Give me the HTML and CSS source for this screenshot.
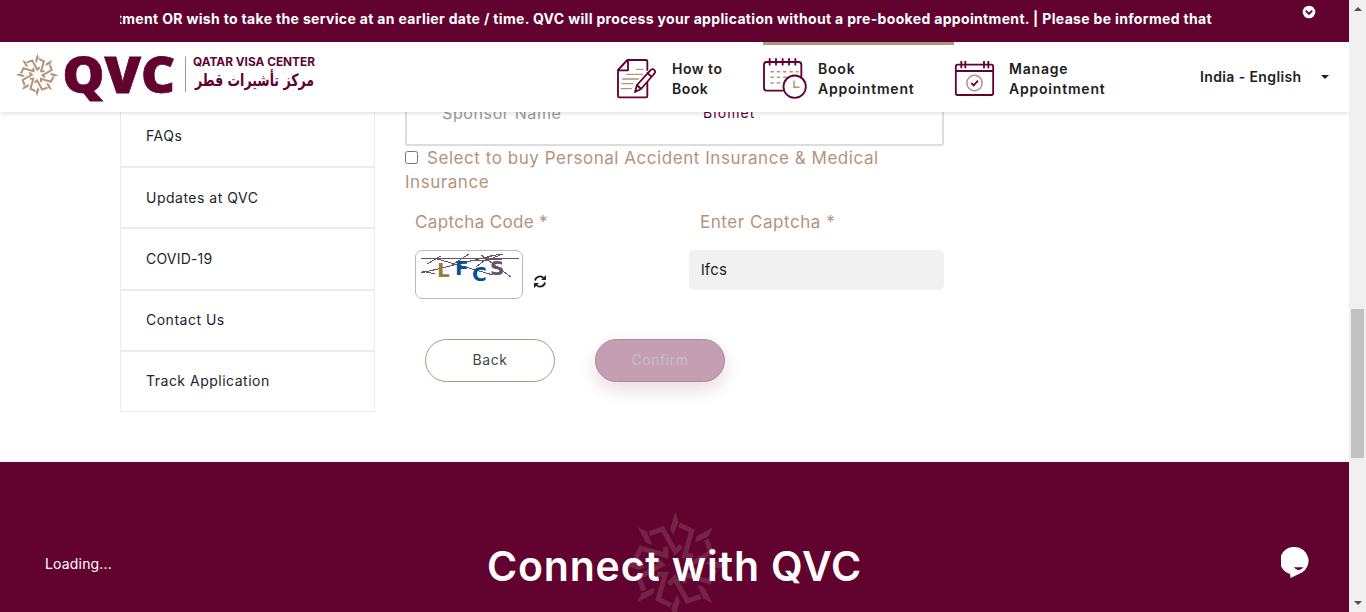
FILE: index.html
```html
<!DOCTYPE html>
<html lang="en">
<head>
<meta charset="utf-8">
<title>Qatar Visa Center</title>
<link rel="stylesheet" href="styles.css">
</head>
<body>
<svg class="defs" aria-hidden="true">
  <defs>
    <g id="arm">
      <path d="M1-160L11-130L-5-90L-15-108Z" fill="currentColor"/>
      <path d="M-77-94L-37-108L1-40L19-58" fill="none" stroke="currentColor" stroke-width="15"/>
    </g>
    <g id="emblem">
      <use href="#arm"/><use href="#arm" transform="rotate(45)"/><use href="#arm" transform="rotate(90)"/><use href="#arm" transform="rotate(135)"/>
      <use href="#arm" transform="rotate(180)"/><use href="#arm" transform="rotate(225)"/><use href="#arm" transform="rotate(270)"/><use href="#arm" transform="rotate(315)"/>
    </g>
  </defs>
</svg>
<div class="page">
  <header class="header">
    <div class="ticker">
      <div class="ticker-window"><span class="ticker-text">tment OR wish to take the service at an earlier date / time. QVC will process your application without a pre-booked appointment. | Please be informed that</span></div>
      <svg class="ticker-toggle" width="14" height="14" viewBox="0 0 14 14"><circle cx="7" cy="7" r="6.3" fill="#fff"/><path d="M3.8 5.6L7 8.8L10.2 5.6" fill="none" stroke="#62022f" stroke-width="1.9"/></svg>
    </div>
    <nav class="nav">
      <svg class="logo" width="320" height="70" viewBox="0 42 320 70">
        <g class="gold" transform="translate(37.2 75) scale(.134)"><use href="#emblem"/></g>
        <text class="logo-main" x="62.500" y="92.500" textLength="112.500" lengthAdjust="spacingAndGlyphs">QVC</text>
        <path d="M185.5 56.500V92" stroke="#b4937b"/>
        <text class="logo-en" x="193" y="66" textLength="122" lengthAdjust="spacingAndGlyphs">QATAR VISA CENTER</text>
        <text class="logo-ar" x="314" y="86" direction="rtl" textLength="119" lengthAdjust="spacingAndGlyphs">مركز تأشيرات قطر</text>
      </svg>
      <a class="nav-item how">
        <svg width="41" height="42" viewBox="48 51 123 126" fill="none" stroke="#62022f" stroke-width="5.500" stroke-linejoin="round" stroke-linecap="round">
          <path d="M142 90V64Q142 60 138 60H82L54 90V168Q54 172 58 172H138Q142 172 142 168V129M84 60V91H55"/>
          <path d="M110 88H129M80 103H128M68 117H115M66 131H99M64 146H94" stroke="#b4937b" stroke-width="4"/>
          <path d="M105 156L111 135L151 91Q158 84 163 90Q168 96 162 102L123 147ZM111 135L123 147M142 99L154 110" fill="#fff"/>
        </svg>
        <span>How to<br>Book</span>
      </a>
      <a class="nav-item book">
        <svg width="45" height="42" viewBox="489 51 135 126" fill="none" stroke="#62022f" stroke-width="5.500" stroke-linecap="round">
          <rect x="492" y="66" width="112" height="86" rx="8"/>
          <path d="M509 57V74M528 57V74M548 57V74M567 57V74M586 57V74"/>
          <path d="M513 95H520M532 95H539M551 95H558M570 95H577M589 95H594M513 112H520M532 112H539M551 112H558M513 129H520M532 129H539" stroke="#b4937b" stroke-width="4.500"/>
          <circle cx="584" cy="140" r="33.500" fill="#fff"/>
          <path d="M582 124V142H597" stroke="#b4937b" stroke-width="4.500"/>
        </svg>
        <span>Book<br>Appointment</span>
      </a>
      <a class="nav-item manage">
        <svg width="41" height="42" viewBox="282 51 123 126" fill="none" stroke="#62022f" stroke-width="5.500">
          <rect x="287.500" y="74" width="112" height="91" rx="5"/>
          <path d="M287 93H400M304 63V85M316 63V85M372 63V85M385 63V85"/>
          <circle cx="343.500" cy="129" r="23" stroke="#b4937b" stroke-width="4.500"/>
          <path d="M334 129L341 136L354 122"/>
        </svg>
        <span>Manage<br>Appointment</span>
      </a>
      <div class="lang"><span>India - English</span><i class="caret"></i></div>
    </nav>
  </header>

  <main class="main">
    <ul class="side">
      <li>FAQs</li><li>Updates at QVC</li><li class="tight">COVID-19</li><li>Contact Us</li><li>Track Application</li>
    </ul>
    <section class="form">
      <div class="card"><span class="card-label">Sponsor Name</span><span class="card-value">Biomet</span></div>
      <label class="insurance"><input type="checkbox">Select to buy Personal Accident Insurance &amp; Medical<br>Insurance</label>
      <div class="captcha">
        <div class="captcha-col">
          <span class="field-label">Captcha Code *</span>
          <div class="captcha-row">
            <svg class="captcha-img" width="108" height="49" viewBox="415 250 108 49">
              <rect x="415.500" y="250.500" width="107" height="48" rx="6.500" fill="#fff" stroke="#bdb7bb"/>
              <g stroke="#675469" fill="none" shape-rendering="crispEdges"><path d="M421 258.500H519M421 273L500 254M427 264L441 256M434 258L493 275M422 271L435 274M452 265L469 254M481 255L511 277M485 261L503 254M470 261L518 258M476 267L492 255"/></g>
              <g class="captcha-text"><text x="437" y="277" fill="#94803a">L</text><text x="455" y="275" fill="#064f94">F</text><text x="472" y="281" fill="#064f94">C</text><text x="490" y="275" fill="#675469">S</text></g>
            </svg>
            <svg width="12" height="13" viewBox="0 0 12 13" fill="none" stroke="#222" stroke-width="1.800"><path d="M1 5.500A5 5 0 0 1 9.800 3.200M11 7.500A5 5 0 0 1 2.200 9.800"/><path d="M12 0V5H7ZM0 13V8H5Z" fill="#222" stroke="none"/></svg>
          </div>
        </div>
        <div class="captcha-col enter">
          <span class="field-label">Enter Captcha *</span>
          <div class="input">lfcs</div>
        </div>
      </div>
      <div class="actions"><button class="btn back">Back</button><button class="btn confirm">Confirm</button></div>
    </section>
  </main>

  <footer class="footer">
    <span class="loading">Loading...</span>
    <div class="connect">
      <svg class="watermark" width="110" height="110" viewBox="-165 -165 330 330"><use href="#emblem"/></svg>
      <h2>Connect with QVC</h2>
    </div>
    <svg class="chat" width="28" height="31" viewBox="0 0 28 31"><path d="M14 0A14 13.800 0 0 1 21 25.500L9.500 31L9 27A14 13.800 0 0 1 14 0Z" fill="#fff"/><path d="M12.800 20.300H22.500Q17.500 26 12.800 20.300Z" fill="#62022f"/></svg>
  </footer>
</div>
<aside class="scroll"><i class="up"></i><i class="thumb"></i><i class="down"></i></aside>
</body>
</html>
```
FILE: styles.css
```css
* { box-sizing: border-box; }
body { margin: 0; display: flex; width: 1366px; height: 612px; overflow: hidden; background: #fff; color: #212529; font-family: Inter, "Open Sans", sans-serif; font-size: 14px; }
.defs { position: absolute; width: 0; height: 0; }
.page { width: 1349px; height: 612px; overflow: hidden; display: flex; flex-direction: column; }
.header { position: relative; z-index: 2; flex: none; box-shadow: 0 1px 5px rgba(0,0,0,.15); }
.ticker { height: 42px; background: #62022f; display: flex; padding-left: 120px; }
.ticker-window { width: 1092px; overflow: hidden; display: flex; justify-content: flex-end; white-space: nowrap; line-height: 38px; }
.ticker-text { color: #fff; font-weight: 700; letter-spacing: .335px; }
.ticker-toggle { margin: 5px 0 0 90px; }
.nav { height: 70px; background: #fff; display: flex; }
.logo { flex: none; margin-right: 296px; }
.gold { color: #b4937b; }
.logo-main { font: 800 50px "Open Sans", sans-serif; fill: #62022f; stroke: #62022f; stroke-width: .8px; }
.logo-en { font: 700 11.500px Inter, sans-serif; fill: #62022f; }
.logo-ar { font: 700 17px "DejaVu Sans", sans-serif; fill: #62022f; }
.nav-item { display: flex; font-weight: 600; line-height: 20px; padding-top: 17px; color: #212121; white-space: nowrap; letter-spacing: .795px; }
.nav-item svg { flex: none; margin-top: -2px; }
.how { width: 147px; gap: 15px; letter-spacing: .52px; }
.book { width: 191px; gap: 10px; border-top: 3px solid #b4937b; padding-top: 14px; }
.manage { width: 246px; gap: 14px; }
.lang { display: flex; align-items: center; gap: 19px; font-weight: 600; color: #212121; white-space: nowrap; letter-spacing: .377px; padding-bottom: 1px; }
.caret { border: 4px solid transparent; border-top-color: #212121; border-bottom: 0; }
.main { height: 350px; flex: none; overflow: hidden; display: flex; padding-left: 120px; gap: 30px; }
.side { list-style: none; margin: -7px 0 0; padding: 0; width: 255px; height: 307px; display: grid; grid-template-rows: repeat(5, 1fr); border: 1px solid #ececec; border-top: 0; letter-spacing: .5px; }
.side li { display: flex; align-items: center; padding: 0 0 1.500px 25px; border-top: 2px solid #ececec; white-space: nowrap; }
.side .tight { letter-spacing: .2px; }
.form { width: 540px; }
.card { width: 539px; height: 54px; margin-top: -20px; border: 2px solid #ddd; border-radius: 3px; padding: 7px 0 0 35px; display: grid; grid-template-columns: 261px 1fr; line-height: 24px; }
.card-label { font-size: 16px; color: #999; letter-spacing: .62px; }
.card-value { color: #62022f; letter-spacing: 1.1px; }
.insurance { display: block; color: #b4937b; font-size: 17px; line-height: 24px; white-space: nowrap; letter-spacing: .545px; }
.insurance input { width: 13px; height: 13px; margin: 0 9px 0 0; vertical-align: 0; }
.captcha { display: grid; grid-template-columns: 284px 255px; color: #b4937b; padding-top: 16px; }
.captcha-col { padding-left: 10px; }
.enter { padding-left: 0; }
.field-label { font-size: 17px; line-height: 24px; display: inline-block; letter-spacing: .35px; }
.enter .field-label { margin-left: 11px; letter-spacing: .54px; }
.captcha-row { display: flex; align-items: center; gap: 11px; margin-top: 16px; }
.captcha-row svg + svg { margin-top: 14px; }
.captcha-text { font: 700 20px "DejaVu Sans", sans-serif; }
.input { margin-top: 16px; height: 40px; background: #f1f1f1; border-radius: 5px; padding-left: 12px; line-height: 40px; font-size: 15px; color: #212121; letter-spacing: .19px; }
.actions { display: flex; gap: 40px; margin: 40px 0 0 20px; }
.btn { width: 130px; height: 43px; border-radius: 22px; font: 14px Inter, sans-serif; padding: 0 0 2px; letter-spacing: .55px; }
.back { background: #fff; border: 1px solid #b4937b; color: #42474d; }
.confirm { background: #c49fb1; border: 1px solid #b5839b; color: #c4bcc4; box-shadow: 0 8px 18px rgba(98,2,47,.14); }
.footer { height: 150px; background: #62022f; color: #fff; display: flex; padding-left: 45px; }
.loading { width: 67px; line-height: 20px; margin-top: 92px; letter-spacing: .177px; }
.connect { display: grid; justify-items: center; width: 377px; margin-left: 374px; }
.connect > * { grid-area: 1 / 1; }
.watermark { color: #752448; margin-top: 48px; }
.connect h2 { margin: 79px 0 0; font-size: 41px; line-height: 50px; font-weight: 600; white-space: nowrap; position: relative; letter-spacing: .812px; }
.chat { margin: 85px 40px 0 auto; }
.scroll { width: 17px; background: #f0f0f0; display: flex; flex-direction: column; align-items: center; }
.up { border: 4px solid transparent; border-top: 0; border-bottom-color: #505050; margin-top: 7px; }
.thumb { width: 13px; height: 149px; background: #c1c1c1; margin-top: 298px; }
.down { border: 4px solid transparent; border-bottom: 0; border-top-color: #505050; margin-top: 143px; }
```
